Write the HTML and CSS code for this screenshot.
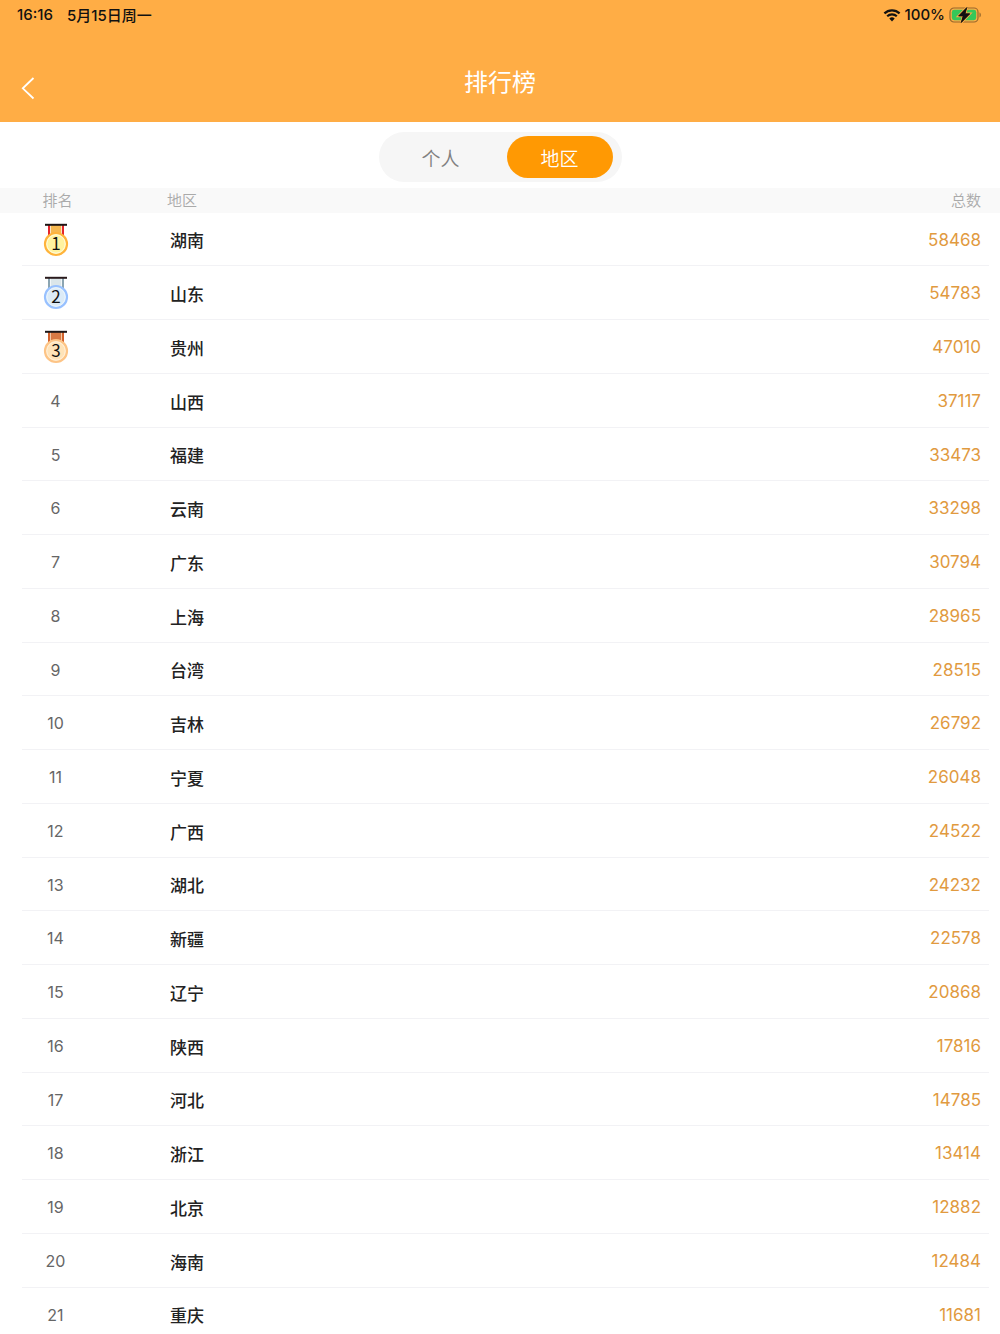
FILE: index.html
```html
<!DOCTYPE html>
<html lang="zh-CN">
<head>
  <meta charset="UTF-8">
  <meta name="viewport" content="width=device-width, initial-scale=1.0">
  <title>排行榜</title>
  <link rel="stylesheet" href="styles.css">
</head>
<body>
  <header class="header">
    <!-- 状态栏 -->
    <div class="status-bar">
      <span class="time">16:16</span>
      <span class="date">5月15日周一</span>
      <div class="status-right">
        <svg class="wifi" width="18" height="14" viewBox="0 0 18 14">
          <path d="M1.4 5.4a11 11 0 0 1 15.2 0" fill="none" stroke="#111" stroke-width="2.2"/>
          <path d="M4.2 8.3a7 7 0 0 1 9.6 0" fill="none" stroke="#111" stroke-width="2.2"/>
          <path d="M9 13.4L6.3 10.6a4 4 0 0 1 5.4 0z" fill="#111"/>
        </svg>
        <span>100%</span>
        <svg class="battery" width="33" height="18" viewBox="0 0 33 18">
          <rect x="1" y="2" width="28" height="14" rx="4" fill="none" stroke="#96682c" stroke-width="1.2"/>
          <rect x="2.8" y="3.8" width="24.4" height="10.4" rx="2.4" fill="#35c759"/>
          <path d="M30.5 6.6c1.8.6 1.8 4.2 0 4.8z" fill="#96682c"/>
          <path d="M17.8 1.6L9.6 10h4.6l-2 6.6 8.6-8.8h-4.8z" fill="#111" stroke="#ffad45" stroke-width="2.4" paint-order="stroke"/>
          <path d="M17.8 1.6L9.6 10h4.6l-2 6.6 8.6-8.8h-4.8z" fill="#111" stroke="#111" stroke-width=".8" stroke-linejoin="round"/>
        </svg>
      </div>
    </div>
    <div class="nav-bar">
      <button type="button" class="back" aria-label="返回">
        <svg width="16" height="24" viewBox="0 0 16 24">
          <path d="M13.5 2L2.8 12.3L13.5 22.5" fill="none" stroke="#fff" stroke-width="1.8"/>
        </svg>
      </button>
      <h1>排行榜</h1>
    </div>
  </header>

  <div class="tabs">
    <div class="tab-group">
      <button type="button" class="tab">个人</button>
      <button type="button" class="tab active">地区</button>
    </div>
  </div>

  <main class="list">
    <table class="ranking">
      <thead>
        <tr><th class="rank">排名</th><th class="area">地区</th><th class="total">总数</th></tr>
      </thead>
      <tbody>
        <tr>
          <td class="rank">
            <svg class="medal" width="26" height="34" viewBox="0 0 26 34">
              <path d="M5 2h16v13H5z" fill="#e5262b"/>
              <path d="M8 2h10v13H8z" fill="#f6b850"/>
              <path d="M7.5 2v13M18.5 2v13" stroke="#fbe3c5" stroke-width="1"/>
              <path d="M2 1.8h22" stroke="#1c1414" stroke-width="2"/>
              <circle cx="13" cy="21" r="11" fill="#fff3a0" stroke="#ffb33b" stroke-width="2.2"/>
              <circle cx="13" cy="21" r="9.2" fill="none" stroke="#fffbe0" stroke-width="1"/>
              <text x="13" y="27" text-anchor="middle">1</text>
            </svg>
          </td>
          <td class="area">湖南</td><td class="total">58468</td>
        </tr>
        <tr>
          <td class="rank">
            <svg class="medal" width="26" height="34" viewBox="0 0 26 34">
              <path d="M5 2h16v13H5z" fill="#8ba5b2"/>
              <path d="M8 2h10v13H8z" fill="#dbe6ea"/>
              <path d="M7.5 2v13M18.5 2v13" stroke="#f2f7f9" stroke-width="1"/>
              <path d="M2 1.8h22" stroke="#2a1b1d" stroke-width="2"/>
              <circle cx="13" cy="21" r="11" fill="#dcebf7" stroke="#98c1ff" stroke-width="2.2"/>
              <circle cx="13" cy="21" r="9.2" fill="none" stroke="#eef7fd" stroke-width="1"/>
              <text x="13" y="27" text-anchor="middle">2</text>
            </svg>
          </td>
          <td class="area">山东</td><td class="total">54783</td>
        </tr>
        <tr>
          <td class="rank">
            <svg class="medal" width="26" height="34" viewBox="0 0 26 34">
              <path d="M5 2h16v13H5z" fill="#d1612c"/>
              <path d="M8 2h10v13H8z" fill="#d87a45"/>
              <path d="M7.5 2v13M18.5 2v13" stroke="#f2c9a8" stroke-width="1"/>
              <path d="M2 1.8h22" stroke="#1c1718" stroke-width="2"/>
              <circle cx="13" cy="21" r="11" fill="#ffe3b8" stroke="#fdc486" stroke-width="2.2"/>
              <circle cx="13" cy="21" r="9.2" fill="none" stroke="#fff1dc" stroke-width="1"/>
              <text x="13" y="27" text-anchor="middle">3</text>
            </svg>
          </td>
          <td class="area">贵州</td><td class="total">47010</td>
        </tr>
        <tr><td class="rank">4</td><td class="area">山西</td><td class="total">37117</td></tr>
        <tr><td class="rank">5</td><td class="area">福建</td><td class="total">33473</td></tr>
        <tr><td class="rank">6</td><td class="area">云南</td><td class="total">33298</td></tr>
        <tr><td class="rank">7</td><td class="area">广东</td><td class="total">30794</td></tr>
        <tr><td class="rank">8</td><td class="area">上海</td><td class="total">28965</td></tr>
        <tr><td class="rank">9</td><td class="area">台湾</td><td class="total">28515</td></tr>
        <tr><td class="rank">10</td><td class="area">吉林</td><td class="total">26792</td></tr>
        <tr><td class="rank">11</td><td class="area">宁夏</td><td class="total">26048</td></tr>
        <tr><td class="rank">12</td><td class="area">广西</td><td class="total">24522</td></tr>
        <tr><td class="rank">13</td><td class="area">湖北</td><td class="total">24232</td></tr>
        <tr><td class="rank">14</td><td class="area">新疆</td><td class="total">22578</td></tr>
        <tr><td class="rank">15</td><td class="area">辽宁</td><td class="total">20868</td></tr>
        <tr><td class="rank">16</td><td class="area">陕西</td><td class="total">17816</td></tr>
        <tr><td class="rank">17</td><td class="area">河北</td><td class="total">14785</td></tr>
        <tr><td class="rank">18</td><td class="area">浙江</td><td class="total">13414</td></tr>
        <tr><td class="rank">19</td><td class="area">北京</td><td class="total">12882</td></tr>
        <tr><td class="rank">20</td><td class="area">海南</td><td class="total">12484</td></tr>
        <tr><td class="rank">21</td><td class="area">重庆</td><td class="total">11681</td></tr>
      </tbody>
    </table>
  </main>
</body>
</html>
```
FILE: styles.css
```css
* {
  box-sizing: border-box;
}

body {
  margin: 0;
  height: 100vh;
  display: flex;
  flex-direction: column;
  background-color: #fff;
  font-family: Inter, "Noto Sans CJK SC", sans-serif;
}

button {
  border: none;
  padding: 0;
  background: none;
  font-family: inherit;
  cursor: pointer;
}

.header {
  flex-shrink: 0;
  background-color: #ffad45;
}

.status-bar {
  display: flex;
  align-items: center;
  height: 29px;
  padding: 0 18px 0 17px;
  font-size: 15px;
  font-weight: 500;
  color: #111;
}

.date {
  margin-left: 14px;
}

.status-right {
  display: flex;
  align-items: center;
  gap: 4px;
  margin-left: auto;
}

.nav-bar {
  display: grid;
  grid-template-columns: 60px 1fr 60px;
  height: 93px;
  padding-top: 31px;
}

.back {
  height: 56px;
  padding-left: 20px;
  text-align: left;
}

.back svg {
  display: block;
}

.nav-bar h1 {
  margin: 0;
  font-size: 24px;
  line-height: 46px;
  font-weight: 400;
  text-align: center;
  color: #fff;
}

.tabs {
  flex-shrink: 0;
  display: flex;
  justify-content: center;
  padding: 10px 0 6px;
}

.tab-group {
  display: flex;
  gap: 13px;
  padding: 4px 9px;
  height: 50px;
  border-radius: 25px;
  background-color: #f6f6f6;
}

.tab {
  width: 106px;
  height: 42px;
  border-radius: 21px;
  font-size: 19px;
  font-weight: 350;
  color: #808080;
}

.tab.active {
  background-color: #ff9903;
  color: #fff;
}

.list {
  flex: 1;
  min-height: 0;
  overflow-y: auto;
  scrollbar-width: none;
}

.ranking {
  width: 100%;
  border-collapse: collapse;
}

.ranking th {
  height: 25px;
  padding: 0;
  background-color: #f9f9f9;
  font-size: 15px;
  line-height: 25px;
  font-weight: 350;
  color: #aaa;
}

.ranking td {
  height: 54px;
  padding: 0;
}

.ranking tr:nth-child(4n + 1) td {
  height: 53px;
}

/* 分割线，左右留白 */
.ranking tbody tr {
  background: linear-gradient(#f2f2f5, #f2f2f5) 22px 100% / calc(100% - 33px) 1px no-repeat;
}

.ranking .rank {
  width: 111px;
  text-align: center;
}

.ranking th.rank {
  padding-left: 4px;
}

.ranking .area {
  padding-left: 59px;
  text-align: left;
}

.ranking th.area {
  padding-left: 56px;
}

.ranking .total {
  padding-right: 19px;
  text-align: right;
}

td.rank {
  font-size: 16px;
  color: #666;
}

td.area {
  font-size: 17px;
  font-weight: 500;
  color: #222;
}

td.total {
  font-size: 17px;
  color: #e19a3f;
}

.medal {
  display: block;
  margin: 0 auto;
}

.medal text {
  font-family: "Noto Sans CJK SC", sans-serif;
  font-size: 17px;
  font-weight: 400;
  fill: #111;
}
```
